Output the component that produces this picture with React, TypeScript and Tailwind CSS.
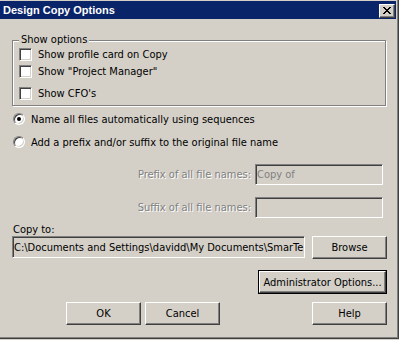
import React from "react";

const raised =
  "bg-[#d4d0c8] border border-t-white border-l-white border-r-[#404040] border-b-[#404040] shadow-[inset_-1px_-1px_0_#808080]";
const sunken =
  "border border-t-[#808080] border-l-[#808080] border-r-white border-b-white shadow-[inset_1px_1px_0_#404040,inset_-1px_-1px_0_#d4d0c8]";

function Checkbox({ label }: { label: string }) {
  return (
    <div className="flex items-center h-[13px]">
      <div className={"w-[13px] h-[13px] shrink-0 bg-white " + sunken} />
      <span className="ml-[6px] whitespace-nowrap">{label}</span>
    </div>
  );
}

function Radio({ label, checked }: { label: string; checked?: boolean }) {
  return (
    <div className="flex items-center h-[12px] ml-[13px]">
      <div
        className={
          "w-[12px] h-[12px] shrink-0 rounded-full bg-white flex items-center justify-center " +
          sunken
        }
      >
        {checked ? <div className="w-[4px] h-[4px] rounded-full bg-black" /> : null}
      </div>
      <span className="ml-[6px] whitespace-nowrap">{label}</span>
    </div>
  );
}

function CloseGlyph() {
  const rows = [
    "XX....XX",
    ".XX..XX.",
    "..XXXX..",
    "...XX...",
    "..XXXX..",
    ".XX..XX.",
    "XX....XX",
  ];
  const rects: React.ReactElement[] = [];
  rows.forEach((r, y) =>
    r.split("").forEach((c, x) => {
      if (c === "X") rects.push(<rect key={x + "-" + y} x={x} y={y} width={1} height={1} fill="#000" />);
    })
  );
  return (
    <svg width="8" height="7" viewBox="0 0 8 7" shapeRendering="crispEdges">
      {rects}
    </svg>
  );
}

export default function App() {
  return (
    <div className="w-[399px] h-[340px] overflow-hidden bg-[#d4d0c8] [font-family:'DejaVu_Sans_Condensed','Liberation_Sans',Arial,sans-serif] text-[11px] leading-[13px] text-black">
      <div className="w-[399px] h-[339px] flex flex-col bg-[#d4d0c8] border-r border-b border-[#404040] shadow-[inset_-1px_-1px_0_#808080] pt-[1px] pr-[2px]">
        {/* Title bar */}
        <div className="h-[18px] shrink-0 bg-[#0a246a] flex justify-between pl-[3px] pr-[1px]">
          <div className="text-white font-bold pt-[3px] whitespace-nowrap [font-family:'Liberation_Sans',Arial,sans-serif]">
            Design Copy Options
          </div>
          <div className={"mt-[3px] w-[16px] h-[14px] flex items-center justify-center pb-[1px] pr-[1px] " + raised}>
            <CloseGlyph />
          </div>
        </div>

        {/* Show options group */}
        <div className="relative ml-[12px] mt-[21px] w-[374px] h-[66px] shrink-0 border border-[#808080] shadow-[1px_1px_0_#fff,inset_1px_1px_0_#fff] pl-[6px] pt-[7px] flex flex-col">
          <span className="absolute left-[6px] top-[-8px] bg-[#d4d0c8] px-[2px] whitespace-nowrap">Show options</span>
          <Checkbox label="Show profile card on Copy" />
          <div className="mt-[4px]">
            <Checkbox label={'Show "Project Manager"'} />
          </div>
          <div className="mt-[9px]">
            <Checkbox label="Show CFO's" />
          </div>
        </div>

        <div className="mt-[7px]">
          <Radio label="Name all files automatically using sequences" checked />
        </div>
        <div className="mt-[11px]">
          <Radio label="Add a prefix and/or suffix to the original file name" />
        </div>

        {/* Prefix */}
        <div className="flex items-center mt-[16px] h-[21px]">
          <div className="w-[251px] text-right text-[#808080] [text-shadow:1px_1px_0_#fff] whitespace-nowrap">
            Prefix of all file names:
          </div>
          <div className={"ml-[4px] w-[128px] h-[21px] bg-[#d4d0c8] text-[#808080] pl-[1px] flex items-center " + sunken}>
            Copy of
          </div>
        </div>

        {/* Suffix */}
        <div className="flex items-center mt-[12px] h-[21px]">
          <div className="w-[251px] text-right text-[#808080] [text-shadow:1px_1px_0_#fff] whitespace-nowrap">
            Suffix of all file names:
          </div>
          <div className={"ml-[4px] w-[128px] h-[21px] bg-[#d4d0c8] " + sunken} />
        </div>

        {/* Copy to */}
        <div className="ml-[13px] mt-[6px] h-[12px] leading-[12px]">Copy to:</div>
        <div className="flex items-start ml-[12px] h-[23px]">
          <div className={"w-[293px] h-[22px] bg-[#d4d0c8] pl-[1px] flex items-center overflow-hidden whitespace-nowrap " + sunken}>
            C:\Documents and Settings\davidd\My Documents\SmarTe
          </div>
          <div className={"ml-[7px] w-[75px] h-[23px] flex items-center justify-center " + raised}>Browse</div>
        </div>

        {/* Administrator Options */}
        <div className="mt-[11px] ml-[258px] w-[129px] h-[24px] border border-black flex">
          <div className={"flex-1 flex items-center justify-center " + raised}>Administrator Options...</div>
        </div>

        {/* Bottom buttons */}
        <div className="flex mt-[8px]">
          <div className={"ml-[66px] w-[75px] h-[23px] flex items-center justify-center " + raised}>OK</div>
          <div className={"ml-[4px] w-[75px] h-[23px] flex items-center justify-center " + raised}>Cancel</div>
          <div className={"ml-[92px] w-[75px] h-[23px] flex items-center justify-center " + raised}>Help</div>
        </div>
      </div>
    </div>
  );
}
